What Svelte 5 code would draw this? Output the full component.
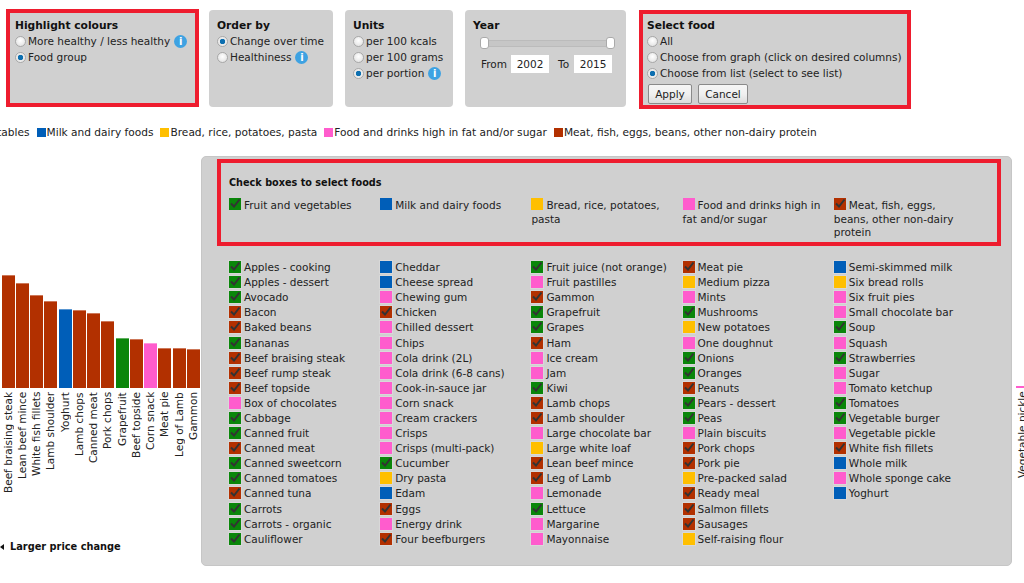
<script>
  const columns = [
    [["Apples - cooking","g"],["Apples - dessert","g"],["Avocado","g"],["Bacon","r"],["Baked beans","r"],["Bananas","g"],["Beef braising steak","r"],["Beef rump steak","r"],["Beef topside","r"],["Box of chocolates","p"],["Cabbage","g"],["Canned fruit","g"],["Canned meat","r"],["Canned sweetcorn","g"],["Canned tomatoes","g"],["Canned tuna","r"],["Carrots","g"],["Carrots - organic","g"],["Cauliflower","g"]],
    [["Cheddar","b"],["Cheese spread","b"],["Chewing gum","p"],["Chicken","r"],["Chilled dessert","p"],["Chips","p"],["Cola drink (2L)","p"],["Cola drink (6-8 cans)","p"],["Cook-in-sauce jar","p"],["Corn snack","p"],["Cream crackers","p"],["Crisps","p"],["Crisps (multi-pack)","p"],["Cucumber","g"],["Dry pasta","y"],["Edam","b"],["Eggs","r"],["Energy drink","p"],["Four beefburgers","r"]],
    [["Fruit juice (not orange)","g"],["Fruit pastilles","p"],["Gammon","r"],["Grapefruit","g"],["Grapes","g"],["Ham","r"],["Ice cream","p"],["Jam","p"],["Kiwi","g"],["Lamb chops","r"],["Lamb shoulder","r"],["Large chocolate bar","p"],["Large white loaf","y"],["Lean beef mince","r"],["Leg of Lamb","r"],["Lemonade","p"],["Lettuce","g"],["Margarine","p"],["Mayonnaise","p"]],
    [["Meat pie","r"],["Medium pizza","y"],["Mints","p"],["Mushrooms","g"],["New potatoes","y"],["One doughnut","p"],["Onions","g"],["Oranges","g"],["Peanuts","r"],["Pears - dessert","g"],["Peas","g"],["Plain biscuits","p"],["Pork chops","r"],["Pork pie","r"],["Pre-packed salad","y"],["Ready meal","r"],["Salmon fillets","r"],["Sausages","r"],["Self-raising flour","y"]],
    [["Semi-skimmed milk","b"],["Six bread rolls","y"],["Six fruit pies","p"],["Small chocolate bar","p"],["Soup","g"],["Squash","p"],["Strawberries","g"],["Sugar","p"],["Tomato ketchup","p"],["Tomatoes","g"],["Vegetable burger","g"],["Vegetable pickle","p"],["White fish fillets","r"],["Whole milk","b"],["Whole sponge cake","p"],["Yoghurt","b"]]
  ];

  const groups = [
    ["Fruit and vegetables","g"],
    ["Milk and dairy foods","b"],
    ["Bread, rice, potatoes, pasta","y"],
    ["Food and drinks high in fat and/or sugar","p"],
    ["Meat, fish, eggs, beans, other non-dairy protein","r"]
  ];

  const bars = [
    ["Beef braising steak",113,"r"],["Lean beef mince",105,"r"],["White fish fillets",93,"r"],["Lamb shoulder",87,"r"],
    ["Yoghurt",79,"b"],["Lamb chops",78,"r"],["Canned meat",75,"r"],["Pork chops",67,"r"],
    ["Grapefruit",50,"g"],["Beef topside",49,"r"],["Corn snack",45,"p"],["Meat pie",40,"r"],["Leg of Lamb",40,"r"],["Gammon",39,"r"]
  ];

  // only the green and red groups are ticked in this view
  const isChecked = (c) => c === "g" || c === "r";
</script>

<div class="page">
  <div class="controls">
    <section class="panel marked highlight">
      <h3>Highlight colours</h3>
      <label class="opt"><input type="radio" name="hl" />More healthy / less healthy<span class="info">i</span></label>
      <label class="opt"><input type="radio" name="hl" checked />Food group</label>
    </section>
    <section class="panel order">
      <h3>Order by</h3>
      <label class="opt"><input type="radio" name="ord" checked />Change over time</label>
      <label class="opt"><input type="radio" name="ord" />Healthiness<span class="info">i</span></label>
    </section>
    <section class="panel units">
      <h3>Units</h3>
      <label class="opt"><input type="radio" name="un" />per 100 kcals</label>
      <label class="opt"><input type="radio" name="un" />per 100 grams</label>
      <label class="opt"><input type="radio" name="un" checked />per portion<span class="info">i</span></label>
    </section>
    <section class="panel year">
      <h3>Year</h3>
      <div class="slider"><span class="handle"></span><span class="handle"></span></div>
      <div class="range">
        <span>From</span><input class="from" value="2002" />
        <span>To</span><input class="to" value="2015" />
      </div>
    </section>
    <section class="panel marked select">
      <h3>Select food</h3>
      <label class="opt"><input type="radio" name="sel" />All</label>
      <label class="opt"><input type="radio" name="sel" />Choose from graph (click on desired columns)</label>
      <label class="opt"><input type="radio" name="sel" checked />Choose from list (select to see list)</label>
      <div class="buttons"><button>Apply</button><button class="cancel">Cancel</button></div>
    </section>
  </div>

  <div class="legend">
    {#each groups as [name, c]}
      <span class="key"><i class="swatch {c}"></i>{name}</span>
    {/each}
  </div>

  <div class="main">
    <div class="chart">
      <div class="bars">
        {#each bars as [name, h, c]}
          <div class="col">
            <div class="plot"><div class="bar {c}" style="height: {h}px"></div></div>
            <div class="name">{name}</div>
          </div>
        {/each}
      </div>
      <div class="price"><i class="arrow"></i>Larger price change</div>
    </div>

    <div class="foods">
      <div class="boxed">
        <h3 class="small">Check boxes to select foods</h3>
        <div class="group-row">
          {#each groups as [name, c]}
            <div class="group">
              <span class="box {c}">
                {#if isChecked(c)}
                  <svg viewBox="0 0 12 12" width="12" height="12"><path d="M2 5.5 5 8.5 10.5 1.5" /></svg>
                {/if}
              </span>{name}
            </div>
          {/each}
        </div>
      </div>
      <div class="list">
        {#each columns as col}
          <div class="list-col">
            {#each col as [name, c]}
              <div class="item">
                <span class="box framed {c}">
                  {#if isChecked(c)}
                    <svg viewBox="0 0 12 12" width="12" height="12"><path d="M2 5.5 5 8.5 10.5 1.5" /></svg>
                  {/if}
                </span>
                <span>{name}</span>
              </div>
            {/each}
          </div>
        {/each}
      </div>
    </div>

    <div class="tail">
      <div class="tail-bar"></div>
      <div class="name">Vegetable pickle</div>
    </div>
  </div>
</div>

<style>
  :global(body) {
    margin: 0;
    background: #fff;
  }

  .page {
    width: 1024px;
    height: 583px;
    overflow: hidden;
    font-family: "DejaVu Sans", Verdana, sans-serif;
    font-size: 10.5px;
    color: #222;
  }

  h3 {
    margin: 0 0 -1px;
    font-size: 10.7px;
    font-weight: bold;
    color: #111;
    line-height: 16px;
  }

  h3.small {
    margin: 0;
    font-size: 9.7px;
  }

  .controls {
    display: flex;
    align-items: flex-start;
    gap: 12px;
    padding: 10px 0 0 6px;
  }

  .panel {
    box-sizing: border-box;
    height: 97px;
    padding: 8px 8px;
    background: #d0d0d0;
    border-radius: 4px;
  }

  .marked {
    border: 4px solid #ee1c2e;
    border-radius: 0;
    height: 98px;
    padding: 4px 0 0 4px;
  }

  .highlight {
    width: 193px;
    margin-top: -1px;
    margin-right: -2px;
    padding: 5px 0 0 5px;
  }
  .order { width: 124px; }
  .units { width: 108px; }
  .year { width: 161px; }
  .select {
    width: 272px;
    height: 99px;
    margin-left: 1px;
  }

  .opt {
    display: flex;
    align-items: center;
    height: 16px;
    white-space: nowrap;
  }

  .opt input {
    appearance: none;
    box-sizing: border-box;
    width: 11px;
    height: 11px;
    margin: 0 2px 0 0;
    flex: none;
    border: 1px solid #a8a8a8;
    border-radius: 50%;
    background: radial-gradient(circle at 50% 40%, #fff, #dcdcdc);
  }

  .opt input:checked {
    background: radial-gradient(circle, #0d6fb0 0 2.5px, #e8e8e8 3px, #f4f4f4);
  }

  .info {
    display: inline-block;
    width: 13px;
    height: 13px;
    margin-left: 4px;
    border-radius: 50%;
    background: #3ea2e2;
    color: #fff;
    font-weight: bold;
    font-size: 10px;
    line-height: 13px;
    text-align: center;
  }

  .slider {
    position: relative;
    height: 5px;
    margin: 7px 6px 0 10px;
    background: #c6c6c6;
    border: 1px solid #bbb;
    border-radius: 2px;
    display: flex;
    justify-content: space-between;
  }

  .handle {
    box-sizing: border-box;
    width: 9px;
    height: 12px;
    margin: -4px -4px 0 -4px;
    background: #fff;
    border: 1px solid #aaa;
    border-radius: 3px;
  }

  .range {
    display: flex;
    align-items: center;
    margin: 8px 0 0 8px;
  }

  .range input {
    box-sizing: border-box;
    height: 18px;
    padding: 0;
    border: 0;
    background: #fff;
    font: inherit;
    color: #222;
    text-align: center;
  }

  .from {
    width: 38px;
    margin: 0 9px 0 4px;
  }

  .to {
    width: 38px;
    margin-left: 5px;
  }

  .buttons {
    display: flex;
    gap: 6px;
    margin: 3px 0 0 1px;
  }

  button {
    box-sizing: border-box;
    width: 44px;
    height: 20px;
    padding: 0;
    font: inherit;
    color: #222;
    background: linear-gradient(#f6f6f6, #f0f0f0 50%, #dcdcdc);
    border: 1px solid #8a8a8a;
    border-radius: 2px;
  }

  .cancel { width: 50px; }

  .legend {
    display: flex;
    gap: 7px;
    margin: 15px 0 0 -89px;
    height: 16px;
    align-items: center;
    font-size: 10.6px;
    white-space: nowrap;
  }

  .key {
    display: flex;
    align-items: center;
    flex: none;
  }

  .swatch {
    width: 9px;
    height: 9px;
    margin-right: 1px;
  }

  .g { background: #0a860a; }
  .b { background: #005eb8; }
  .y { background: #ffbf00; }
  .p { background: #ff5ccd; }
  .r { background: #b23000; }

  .main {
    display: flex;
    align-items: flex-start;
    margin-top: 16px;
  }

  .chart {
    flex: none;
    width: 201px;
  }

  .bars {
    display: flex;
    gap: 1.26px;
    padding: 119px 0 0 1.67px;
  }

  .col { width: 13px; }

  .plot {
    display: flex;
    align-items: flex-end;
    height: 113px;
  }

  .bar {
    width: 13px;
    box-sizing: border-box;
    border-top: 1px solid rgba(255, 255, 255, 0.35);
  }

  .name {
    writing-mode: vertical-rl;
    transform: rotate(180deg);
    margin-top: 4px;
    width: 13px;
    line-height: 13px;
    white-space: nowrap;
  }

  .col .name { height: 104px; text-align: right; }

  .price {
    display: flex;
    align-items: center;
    margin-top: 45px;
    font-weight: bold;
    font-size: 9.8px;
    color: #111;
    white-space: nowrap;
  }

  .arrow {
    width: 0;
    height: 0;
    margin-right: 6px;
    border: solid transparent;
    border-width: 3px 4px 3px 0;
    border-right-color: #111;
  }

  .foods {
    flex: none;
    box-sizing: border-box;
    width: 811px;
    height: 410px;
    padding: 2px 11px 0 15px;
    background: #d0d0d0;
    border: 1px solid #c6c6c6;
    border-radius: 5px;
  }

  .boxed {
    box-sizing: border-box;
    height: 87px;
    padding: 12px 0 0 8px;
    border: 4px solid #ee1c2e;
    width: 784px;
  }

  .group-row {
    display: grid;
    grid-template-columns: repeat(5, 151.2px);
    margin-top: 7px;
  }

  .group {
    width: 138px;
    line-height: 13.6px;
  }

  .box {
    display: inline-block;
    width: 12px;
    height: 12px;
    margin-right: 3px;
    vertical-align: -1px;
  }

  .box svg {
    display: block;
    fill: none;
    stroke: #333;
    stroke-width: 2;
  }

  .framed {
    flex: none;
    margin-right: 3px;
    box-shadow: 0 0 0 1px rgba(255, 255, 255, 0.18);
  }

  .list {
    display: grid;
    grid-template-columns: repeat(5, 151.2px);
    padding: 13.5px 0 0 12px;
  }

  .item {
    display: flex;
    align-items: center;
    height: 15.1px;
    white-space: nowrap;
  }

  .tail {
    flex: none;
    width: 12px;
    margin-left: 4px;
    padding-top: 230px;
  }

  .tail-bar {
    height: 2px;
    background: #ff5ccd;
  }

  .tail .name {
    margin-top: 3px;
    margin-left: 0;
    height: 90px;
    text-align: right;
  }
</style>
